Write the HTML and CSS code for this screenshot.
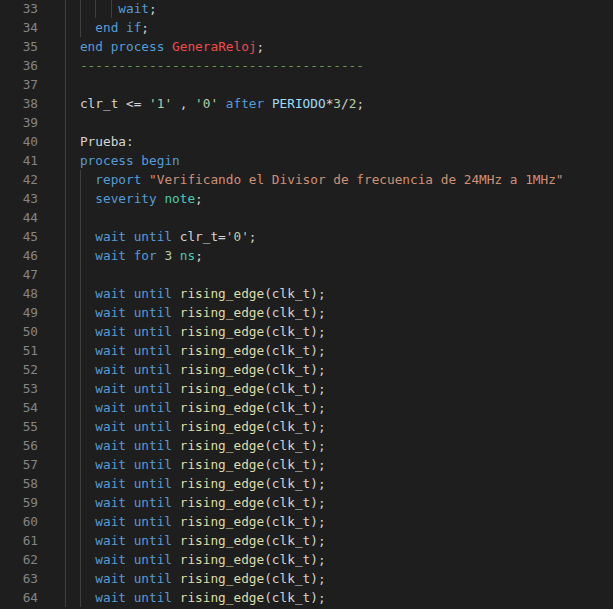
FILE: index.html
```html
<!DOCTYPE html>
<html lang="es">
<head>
<meta charset="utf-8">
<title>Editor VHDL</title>
<link rel="stylesheet" href="styles.css">
</head>
<body>
<div class="editor">
  <div class="line"><span class="ln">33</span><span class="code"><span class="g"></span><span class="g"></span><span class="g"></span><span class="g g1"></span><span class="k">wait</span>;</span></div>
  <div class="line"><span class="ln">34</span><span class="code"><span class="g"></span><span class="g"></span><span class="k">end if</span>;</span></div>
  <div class="line"><span class="ln">35</span><span class="code"><span class="g"></span><span class="k">end process</span> <span class="e">GeneraReloj</span>;</span></div>
  <div class="line"><span class="ln">36</span><span class="code"><span class="g"></span><span class="c">-------------------------------------</span></span></div>
  <div class="line"><span class="ln">37</span><span class="code"><span class="g"></span></span></div>
  <div class="line"><span class="ln">38</span><span class="code"><span class="g"></span>clr_t &lt;= <span class="n">'1'</span> , <span class="n">'0'</span> <span class="k">after</span> <span class="v">PERIODO</span>*<span class="n">3</span>/<span class="n">2</span>;</span></div>
  <div class="line"><span class="ln">39</span><span class="code"><span class="g"></span></span></div>
  <div class="line"><span class="ln">40</span><span class="code"><span class="g"></span>Prueba:</span></div>
  <div class="line"><span class="ln">41</span><span class="code"><span class="g"></span><span class="k">process begin</span></span></div>
  <div class="line"><span class="ln">42</span><span class="code"><span class="g"></span><span class="g"></span><span class="k">report</span> <span class="s">"Verificando el Divisor de frecuencia de 24MHz a 1MHz"</span></span></div>
  <div class="line"><span class="ln">43</span><span class="code"><span class="g"></span><span class="g"></span><span class="k">severity</span> <span class="t">note</span>;</span></div>
  <div class="line"><span class="ln">44</span><span class="code"><span class="g"></span><span class="g"></span></span></div>
  <div class="line"><span class="ln">45</span><span class="code"><span class="g"></span><span class="g"></span><span class="k">wait until</span> clr_t=<span class="n">'0'</span>;</span></div>
  <div class="line"><span class="ln">46</span><span class="code"><span class="g"></span><span class="g"></span><span class="k">wait for</span> <span class="n">3</span> <span class="t">ns</span>;</span></div>
  <div class="line"><span class="ln">47</span><span class="code"><span class="g"></span><span class="g"></span></span></div>
  <div class="line"><span class="ln">48</span><span class="code"><span class="g"></span><span class="g"></span><span class="k">wait until</span> <span class="f">rising_edge</span>(clk_t);</span></div>
  <div class="line"><span class="ln">49</span><span class="code"><span class="g"></span><span class="g"></span><span class="k">wait until</span> <span class="f">rising_edge</span>(clk_t);</span></div>
  <div class="line"><span class="ln">50</span><span class="code"><span class="g"></span><span class="g"></span><span class="k">wait until</span> <span class="f">rising_edge</span>(clk_t);</span></div>
  <div class="line"><span class="ln">51</span><span class="code"><span class="g"></span><span class="g"></span><span class="k">wait until</span> <span class="f">rising_edge</span>(clk_t);</span></div>
  <div class="line"><span class="ln">52</span><span class="code"><span class="g"></span><span class="g"></span><span class="k">wait until</span> <span class="f">rising_edge</span>(clk_t);</span></div>
  <div class="line"><span class="ln">53</span><span class="code"><span class="g"></span><span class="g"></span><span class="k">wait until</span> <span class="f">rising_edge</span>(clk_t);</span></div>
  <div class="line"><span class="ln">54</span><span class="code"><span class="g"></span><span class="g"></span><span class="k">wait until</span> <span class="f">rising_edge</span>(clk_t);</span></div>
  <div class="line"><span class="ln">55</span><span class="code"><span class="g"></span><span class="g"></span><span class="k">wait until</span> <span class="f">rising_edge</span>(clk_t);</span></div>
  <div class="line"><span class="ln">56</span><span class="code"><span class="g"></span><span class="g"></span><span class="k">wait until</span> <span class="f">rising_edge</span>(clk_t);</span></div>
  <div class="line"><span class="ln">57</span><span class="code"><span class="g"></span><span class="g"></span><span class="k">wait until</span> <span class="f">rising_edge</span>(clk_t);</span></div>
  <div class="line"><span class="ln">58</span><span class="code"><span class="g"></span><span class="g"></span><span class="k">wait until</span> <span class="f">rising_edge</span>(clk_t);</span></div>
  <div class="line"><span class="ln">59</span><span class="code"><span class="g"></span><span class="g"></span><span class="k">wait until</span> <span class="f">rising_edge</span>(clk_t);</span></div>
  <div class="line"><span class="ln">60</span><span class="code"><span class="g"></span><span class="g"></span><span class="k">wait until</span> <span class="f">rising_edge</span>(clk_t);</span></div>
  <div class="line"><span class="ln">61</span><span class="code"><span class="g"></span><span class="g"></span><span class="k">wait until</span> <span class="f">rising_edge</span>(clk_t);</span></div>
  <div class="line"><span class="ln">62</span><span class="code"><span class="g"></span><span class="g"></span><span class="k">wait until</span> <span class="f">rising_edge</span>(clk_t);</span></div>
  <div class="line"><span class="ln">63</span><span class="code"><span class="g"></span><span class="g"></span><span class="k">wait until</span> <span class="f">rising_edge</span>(clk_t);</span></div>
  <div class="line"><span class="ln">64</span><span class="code"><span class="g"></span><span class="g"></span><span class="k">wait until</span> <span class="f">rising_edge</span>(clk_t);</span></div>
</div>
</body>
</html>
```

FILE: styles.css
```css
html, body {
  margin: 0;
  padding: 0;
  background: #1e1e1e;
  height: 100%;
  overflow: hidden;
}

.editor {
  font-family: "DejaVu Sans Mono", "Liberation Mono", monospace;
  font-size: 12.76px;
  color: #d4d4d4;
  margin-top: -1px;
}

.line {
  display: flex;
  height: 19px;
  line-height: 19px;
  white-space: pre;
}

.ln {
  width: 38px;
  flex: none;
  text-align: right;
  color: #858585;
}

.code {
  display: block;
  flex: 1;
  padding-left: 26.6px;
  height: 19px;
}

.g {
  display: inline-block;
  width: 2ch;
  height: 19px;
  vertical-align: top;
  box-shadow: inset 1px 0 0 #404040;
}

.g1 {
  width: 1ch;
}

.k { color: #569cd6; }
.s { color: #ce9178; }
.n { color: #b5cea8; }
.t { color: #4ec9b0; }
.f { color: #dcdcaa; }
.v { color: #9cdcfe; }
.e { color: #f14c4c; }
.c { color: #6a9955; }
```
